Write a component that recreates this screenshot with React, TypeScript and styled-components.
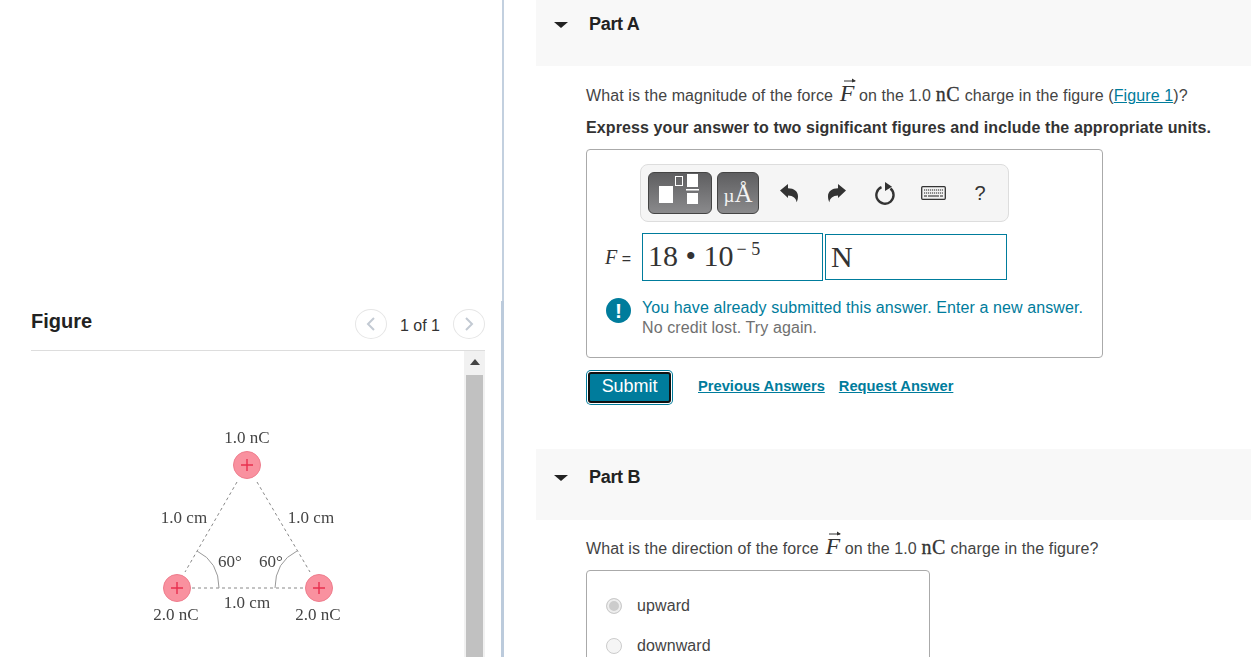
import React from "react";
import styled, { createGlobalStyle } from "styled-components";

const GlobalStyle = createGlobalStyle`
  html, body { margin: 0; padding: 0; background: #fff; overflow: hidden; }
  body { font-family: "Liberation Sans", Arial, sans-serif; color: #444; }
`;

const Page = styled.div`
  display: flex;
  width: 1251px;
  height: 657px;
  overflow: hidden;
`;

const LeftPane = styled.div`
  width: 501px;
  flex: none;
  box-sizing: border-box;
  padding: 308px 16px 0 31px;
`;

const FigureHeader = styled.div`
  display: flex;
  align-items: center;
  justify-content: space-between;
  height: 43px;
  box-sizing: border-box;
  padding-bottom: 11px;
  border-bottom: 1px solid #ddd;
`;

const FigureTitle = styled.h2`
  margin: 0 0 6px;
  font-size: 20px;
  line-height: 24px;
  font-weight: 700;
  color: #222;
`;

const Pager = styled.div`
  display: flex;
  align-items: center;
  gap: 13px;
  font-size: 16px;
  color: #333;
`;

const PagerLabel = styled.span`
  padding-top: 4px;
`;

const PagerButton = styled.span`
  display: flex;
  align-items: center;
  justify-content: center;
  width: 30px;
  height: 28px;
  border: 1px solid #e6e6e6;
  border-radius: 50%;
`;

const FigureBody = styled.div`
  display: flex;
  height: 306px;
`;

const FigureCanvas = styled.div`
  flex: 1;
  padding: 69px 0 0 109px;
`;

const Diagram = styled.svg`
  display: block;
  filter: blur(0.35px);
`;

const ScrollBar = styled.div`
  width: 21px;
  flex: none;
  background: #f1f1f1;
  display: flex;
  flex-direction: column;
  align-items: center;
`;

const ScrollArrow = styled.span`
  width: 0;
  height: 0;
  margin: 8px 0 10px;
  border-left: 5px solid transparent;
  border-right: 5px solid transparent;
  border-bottom: 6px solid #444;
`;

const ScrollThumb = styled.div`
  width: 17px;
  flex: 1;
  background: #c1c1c1;
`;

const Divider = styled.div`
  width: 3px;
  flex: none;
  display: flex;
  flex-direction: column;
`;

const DividerTop = styled.div`
  height: 301px;
  margin-left: 1px;
  background: #c3d0df;
`;

const DividerBottom = styled.div`
  flex: 1;
  background: #bccbdc;
`;

const RightPane = styled.div`
  flex: 1;
  padding-left: 32px;
`;

const PartHeader = styled.div<{ $height: number; $top: number; $gap?: number }>`
  display: flex;
  align-items: flex-start;
  gap: 21px;
  height: ${(p) => p.$height}px;
  margin-top: ${(p) => p.$gap ?? 0}px;
  box-sizing: border-box;
  padding: ${(p) => p.$top}px 0 0 18px;
  background: #f8f8f8;
`;

const Caret = styled.span`
  width: 0;
  height: 0;
  margin-top: 8px;
  border-left: 7px solid transparent;
  border-right: 7px solid transparent;
  border-top: 6px solid #222;
`;

const PartTitle = styled.h3`
  margin: 0;
  font-size: 18px;
  line-height: 21px;
  font-weight: 700;
  color: #222;
  letter-spacing: -0.3px;
`;

const PartBody = styled.div`
  padding-left: 50px;
`;

const Question = styled.p<{ $top: number }>`
  margin: ${(p) => p.$top}px 0 0;
  font-size: 16px;
  line-height: 24px;
  letter-spacing: 0.1px;
  color: #444;
  white-space: nowrap;
`;

const Instruction = styled.p`
  margin: 8px 0 0;
  font-size: 16px;
  line-height: 24px;
  letter-spacing: 0.11px;
  font-weight: 700;
  color: #333;
  white-space: nowrap;
`;

const VectorF = styled.span`
  position: relative;
  display: inline-block;
  margin: 0 0 0 2px;
  font-family: "Liberation Serif", serif;
  font-style: italic;
  font-size: 24px;
  line-height: 16px;
  color: #333;

  svg {
    position: absolute;
    left: 3px;
    top: -9px;
  }
`;

const MathUnit = styled.span`
  font-family: "Liberation Serif", serif;
  font-size: 20px;
  line-height: 16px;
  letter-spacing: 0.6px;
  -webkit-text-stroke: 0.3px #333;
  color: #333;
`;

const FigureLink = styled.a`
  color: #007c9c;
  text-decoration: underline;
`;

const AnswerBox = styled.div`
  box-sizing: border-box;
  width: 517px;
  height: 209px;
  margin-top: 9px;
  padding: 14px 0 0 15px;
  border: 1px solid #aaa;
  border-radius: 4px;
`;

const Toolbar = styled.div`
  display: flex;
  align-items: center;
  box-sizing: border-box;
  width: 369px;
  height: 58px;
  margin-left: 38px;
  padding-left: 7px;
  background: #f5f5f5;
  border: 1px solid #ddd;
  border-radius: 8px;
`;

const TemplateButton = styled.div<{ $width: number }>`
  width: ${(p) => p.$width}px;
  height: 42px;
  flex: none;
  margin-right: 5px;
  box-sizing: border-box;
  background: linear-gradient(#5e5e60, #8a8a8c);
  border: 1px solid #444;
  border-radius: 6px;
  display: flex;
  align-items: baseline;
  justify-content: center;
  color: #f2f2f2;
  font-family: "Liberation Serif", serif;
  line-height: 42px;
`;

const UnitMu = styled.span`
  font-size: 19px;
`;

const UnitAngstrom = styled.span`
  font-size: 25px;
`;

const ToolIcon = styled.span<{ $width: number }>`
  display: flex;
  align-items: center;
  justify-content: center;
  width: ${(p) => p.$width}px;
  color: #333;
  font-size: 20px;
`;

const AnswerRow = styled.div`
  display: flex;
  align-items: center;
  margin-top: 11px;
`;

const VarLabel = styled.span`
  width: 40px;
  flex: none;
  font-size: 16px;
  color: #333;
  text-align: right;
  box-sizing: border-box;
  padding-right: 11px;
  white-space: nowrap;
`;

const VarName = styled.i`
  font-family: "Liberation Serif", serif;
  font-size: 20px;
`;

const MathInput = styled.div<{ $width: number; $height: number }>`
  box-sizing: border-box;
  width: ${(p) => p.$width}px;
  height: ${(p) => p.$height}px;
  margin-right: 2px;
  padding: 0 0 0 5px;
  border: 1px solid #007c9c;
  font-family: "Liberation Serif", serif;
  font-size: 30px;
  line-height: 44px;
  color: #333;
  white-space: nowrap;
`;

const Sup = styled.span`
  font-size: 18px;
  vertical-align: 11px;
  line-height: 0;
  margin-left: 3px;
`;

const Feedback = styled.div`
  display: flex;
  gap: 11px;
  margin: 17px 0 0 4px;
  font-size: 16px;
  line-height: 20px;
  letter-spacing: 0.1px;
`;

const FeedbackIcon = styled.span`
  width: 25px;
  height: 25px;
  flex: none;
  border-radius: 50%;
  background: #007c9c;
  color: #fff;
  font-weight: 700;
  font-size: 21px;
  line-height: 25px;
  text-align: center;
`;

const FeedbackLead = styled.div`
  color: #007c9c;
  white-space: nowrap;
`;

const FeedbackTail = styled.div`
  color: #707070;
`;

const ActionRow = styled.div`
  display: flex;
  align-items: center;
  height: 35px;
  margin-top: 12px;
`;

const SubmitButton = styled.button`
  box-sizing: border-box;
  width: 83px;
  height: 31px;
  margin: 0 2px;
  padding: 0 0 2px;
  background: #007c9c;
  border: 2px solid #111;
  border-radius: 3px;
  box-shadow: 0 0 0 1px #fff, 0 0 0 2px #007c9c;
  color: #fff;
  font-family: "Liberation Sans", Arial, sans-serif;
  font-size: 18px;
  letter-spacing: -0.05px;
`;

const ActionLink = styled.a<{ $left: number }>`
  margin: 0 0 4px ${(p) => p.$left}px;
  color: #007c9c;
  font-weight: 700;
  font-size: 14.7px;
  text-decoration: underline;
  white-space: nowrap;
`;

const OptionBox = styled.div`
  box-sizing: border-box;
  width: 344px;
  height: 120px;
  margin-top: 9px;
  padding: 15px 0 0 19px;
  border: 1px solid #aaa;
  border-radius: 4px;
`;

const OptionRow = styled.div`
  display: flex;
  align-items: center;
  gap: 15px;
  height: 40px;
  font-size: 16px;
  letter-spacing: 0.1px;
  color: #444;
`;

const Radio = styled.span<{ $checked?: boolean }>`
  width: 16px;
  height: 16px;
  box-sizing: border-box;
  border-radius: 50%;
  border: 1px solid #ccc;
  background: ${(p) => (p.$checked ? "#ccc" : "#f5f5f5")};
  box-shadow: ${(p) => (p.$checked ? "inset 0 0 0 2px #eee" : "none")};
`;

function Arrow() {
  return (
    <svg width="14" height="8" viewBox="0 0 14 8">
      <path d="M1 5h11" stroke="#333" strokeWidth="1" />
      <path d="M9 2.5L13 5L9 6.5z" fill="#333" />
    </svg>
  );
}

function Force() {
  return (
    <VectorF>
      <Arrow />F
    </VectorF>
  );
}

function Chevron({ flip }: { flip?: boolean }) {
  return (
    <svg width="10" height="14" viewBox="0 0 10 14">
      <path
        d={flip ? "M2 1l6 6l-6 6" : "M8 1L2 7l6 6"}
        fill="none"
        stroke="#c3cad3"
        strokeWidth="2"
      />
    </svg>
  );
}

function Charge({ cx, cy }: { cx: number; cy: number }) {
  return (
    <g>
      <circle cx={cx} cy={cy} r="13.5" fill="#f9919f" stroke="#ee7d8d" strokeWidth="1" />
      <path d={`M${cx - 6} ${cy}h12M${cx} ${cy - 6}v12`} stroke="#e8304f" strokeWidth="1.4" />
    </g>
  );
}

function ChargeDiagram() {
  const labels: [number, number, string][] = [
    [107, 23, "1.0 nC"],
    [44, 103, "1.0 cm"],
    [171, 103, "1.0 cm"],
    [107, 188, "1.0 cm"],
    [36, 200, "2.0 nC"],
    [178, 200, "2.0 nC"],
    [90, 147, "60°"],
    [131, 147, "60°"],
  ];
  return (
    <Diagram width="220" height="215" viewBox="0 0 220 215">
      <path
        d="M97 62L45 152M117 62L170 152M52 168H164"
        fill="none"
        stroke="#888"
        strokeWidth="1"
        strokeDasharray="3 3"
      />
      <path d="M57 131Q79 142 79 168M157 131Q135 142 135 168" fill="none" stroke="#999" strokeWidth="1" />
      <Charge cx={107} cy={45} />
      <Charge cx={37} cy={168} />
      <Charge cx={179} cy={168} />
      {labels.map(([x, y, t]) => (
        <text key={`${x}-${y}`} x={x} y={y} textAnchor="middle" fontFamily="Liberation Serif" fontSize="17" fill="#444">
          {t}
        </text>
      ))}
    </Diagram>
  );
}

function TemplateGlyph() {
  return (
    <svg width="42" height="32" viewBox="0 0 42 32">
      <rect x="0" y="13" width="14" height="17" fill="#fff" />
      <rect x="16.5" y="3.5" width="7" height="9" fill="none" stroke="#fff" strokeWidth="1" />
      <rect x="28" y="1" width="11" height="13" fill="#fff" />
      <rect x="27" y="16" width="13" height="1.5" fill="#fff" />
      <rect x="28" y="20" width="11" height="11" fill="#fff" />
    </svg>
  );
}

function UndoGlyph({ flip }: { flip?: boolean }) {
  return (
    <svg width="18" height="20" viewBox="0 0 18 20">
      <path
        transform={flip ? "translate(18 0) scale(-1 1)" : undefined}
        d="M0 7.5L8 1v4.2c6 0 10 3 10 8c0 2.4-.6 4.4-1.4 6c-.4-3.6-3.4-6.6-8.6-6.6V15z"
        fill="#333"
      />
    </svg>
  );
}

function KeyboardGlyph() {
  return (
    <svg width="25" height="16" viewBox="0 0 25 16">
      <rect x="0.7" y="1.7" width="23.6" height="12.6" rx="1" fill="#f2f2f2" stroke="#333" strokeWidth="1.3" />
      <path d="M3 5h19M3 8h19" stroke="#666" strokeWidth="1.4" strokeDasharray="1.2 0.8" />
      <path d="M3 11h3M7 11h11M19 11h3" stroke="#666" strokeWidth="1.4" />
    </svg>
  );
}

function ResetGlyph() {
  return (
    <svg width="22" height="24" viewBox="0 0 22 24">
      <path d="M16.5 7.5A8.6 8.6 0 1 1 7.5 6.2" fill="none" stroke="#333" strokeWidth="2.4" />
      <path d="M11 1L18 5.8L11 10z" fill="#333" />
    </svg>
  );
}

export default function App() {
  return (
    <Page>
      <GlobalStyle />
      <LeftPane>
        <FigureHeader>
          <FigureTitle>Figure</FigureTitle>
          <Pager>
            <PagerButton><Chevron /></PagerButton>
            <PagerLabel>1 of 1</PagerLabel>
            <PagerButton><Chevron flip /></PagerButton>
          </Pager>
        </FigureHeader>
        <FigureBody>
          <FigureCanvas>
            <ChargeDiagram />
          </FigureCanvas>
          <ScrollBar>
            <ScrollArrow />
            <ScrollThumb />
          </ScrollBar>
        </FigureBody>
      </LeftPane>
      <Divider>
        <DividerTop />
        <DividerBottom />
      </Divider>
      <RightPane>
        <PartHeader $height={66} $top={14}>
          <Caret />
          <PartTitle>Part A</PartTitle>
        </PartHeader>
        <PartBody>
          <Question $top={18}>
            What is the magnitude of the force <Force /> on the 1.0 <MathUnit>nC</MathUnit> charge in the figure (
            <FigureLink>Figure 1</FigureLink>)?
          </Question>
          <Instruction>Express your answer to two significant figures and include the appropriate units.</Instruction>
          <AnswerBox>
            <Toolbar>
              <TemplateButton $width={64}><TemplateGlyph /></TemplateButton>
              <TemplateButton $width={42}><UnitMu>µ</UnitMu><UnitAngstrom>Å</UnitAngstrom></TemplateButton>
              <ToolIcon $width={50}><UndoGlyph /></ToolIcon>
              <ToolIcon $width={46}><UndoGlyph flip /></ToolIcon>
              <ToolIcon $width={50}><ResetGlyph /></ToolIcon>
              <ToolIcon $width={46}><KeyboardGlyph /></ToolIcon>
              <ToolIcon $width={48}>?</ToolIcon>
            </Toolbar>
            <AnswerRow>
              <VarLabel><VarName>F</VarName> =</VarLabel>
              <MathInput $width={181} $height={48}>18 • 10<Sup>− 5</Sup></MathInput>
              <MathInput $width={182} $height={46}>N</MathInput>
            </AnswerRow>
            <Feedback>
              <FeedbackIcon>!</FeedbackIcon>
              <div>
                <FeedbackLead>You have already submitted this answer. Enter a new answer.</FeedbackLead>
                <FeedbackTail>No credit lost. Try again.</FeedbackTail>
              </div>
            </Feedback>
          </AnswerBox>
          <ActionRow>
            <SubmitButton>Submit</SubmitButton>
            <ActionLink $left={25}>Previous Answers</ActionLink>
            <ActionLink $left={14}>Request Answer</ActionLink>
          </ActionRow>
        </PartBody>
        <PartHeader $height={71} $top={18} $gap={44}>
          <Caret />
          <PartTitle>Part B</PartTitle>
        </PartHeader>
        <PartBody>
          <Question $top={17}>
            What is the direction of the force <Force /> on the 1.0 <MathUnit>nC</MathUnit> charge in the figure?
          </Question>
          <OptionBox>
            <OptionRow><Radio $checked />upward</OptionRow>
            <OptionRow><Radio />downward</OptionRow>
          </OptionBox>
        </PartBody>
      </RightPane>
    </Page>
  );
}
